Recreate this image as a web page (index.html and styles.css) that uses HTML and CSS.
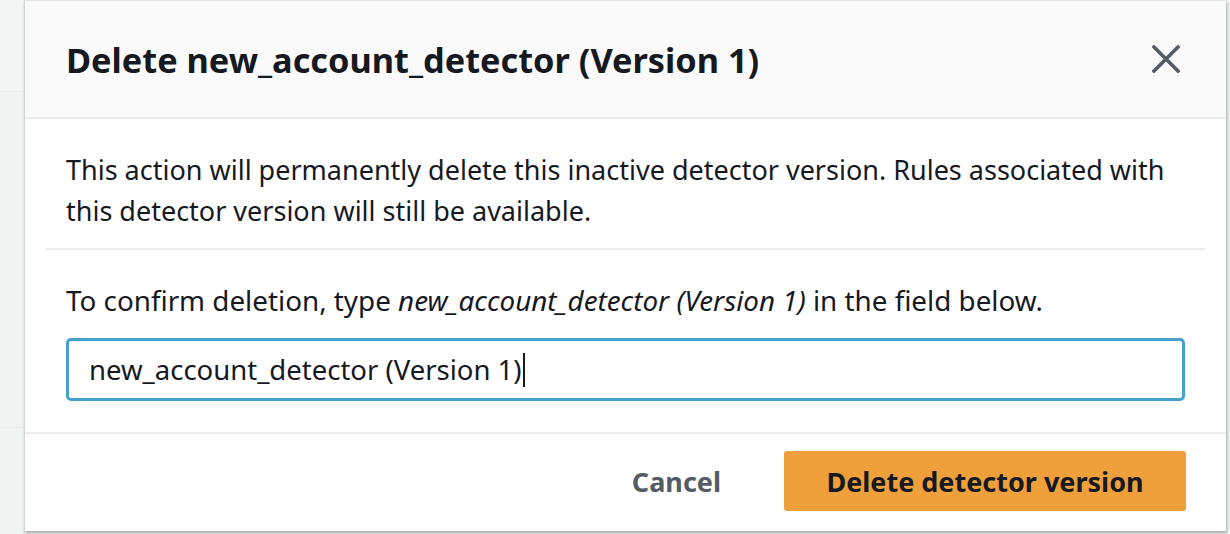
FILE: index.html
```html
<!DOCTYPE html>
<html>
<head>
<meta charset="utf-8">
<link rel="stylesheet" href="styles.css">
</head>
<body>
<div class="page">
  <div class="backdrop">
    <div class="bg-row bg-top"></div>
    <div class="bg-row bg-mid"></div>
    <div class="bg-row bg-bottom"></div>
  </div>
  <div class="modal">
    <div class="modal-header">
      <h2 class="modal-title">Delete new_account_detector (Version 1)</h2>
      <button class="close-btn" aria-label="Close">
        <svg width="28" height="28" viewBox="0 0 28 28"><path d="M2 2 L26 26 M26 2 L2 26" stroke="#545b64" stroke-width="3.6" stroke-linecap="square" fill="none"/></svg>
      </button>
    </div>
    <div class="modal-body">
      <p class="intro">This action will permanently delete this inactive detector version. Rules associated with this detector version will still be available.</p>
      <div class="divider"></div>
      <p class="confirm">To confirm deletion, type <em>new_account_detector (Version 1)</em> in the field below.</p>
      <div class="input"><span class="input-text">new_account_detector (Version 1)</span><span class="caret"></span></div>
    </div>
    <div class="modal-footer">
      <button class="btn-link">Cancel</button>
      <button class="btn-primary">Delete detector version</button>
    </div>
  </div>
</div>
</body>
</html>
```
FILE: styles.css
```css
html, body {
  margin: 0;
  padding: 0;
  background: #f2f3f3;
}
body {
  font-family: "Noto Sans", "Open Sans", sans-serif;
  color: #16191f;
  width: 1230px;
  height: 534px;
  overflow: hidden;
}
.page {
  display: flex;
  height: 534px;
}
.backdrop {
  width: 24px;
  display: flex;
  flex-direction: column;
}
.bg-row { background: #f2f3f3; }
.bg-top { height: 91px; background: #f4f5f5; border-bottom: 1px solid #eceeee; }
.bg-mid { height: 335px; border-bottom: 1px solid #e6e8e8; }
.bg-bottom { flex: 1; }
.modal {
  width: 1201px;
  height: 530px;
  background: #fff;
  border-top: 1px solid #e4e6e6;
  border-left: 1px solid #d0d4d6;
  box-shadow: 1px 2px 3px rgba(0, 28, 36, 0.35);
  display: flex;
  flex-direction: column;
}
.modal-header {
  height: 116px;
  background: #fafafa;
  border-bottom: 2px solid #eaeded;
  display: flex;
  align-items: center;
  justify-content: space-between;
  padding: 0 46px 0 41px;
  box-sizing: content-box;
}
.modal-title {
  margin: 0;
  font-size: 34.3px;
  font-weight: 700;
  line-height: 40px;
  margin-top: 2px;
  color: #16191f;
}
.close-btn {
  background: none;
  border: 0;
  padding: 0;
  width: 28px;
  height: 28px;
  display: flex;
}
.modal-body {
  padding: 0 41px;
}
.intro {
  margin: 0;
  padding-top: 30px;
  font-size: 27px;
  line-height: 41px;
}
.divider {
  height: 2px;
  background: #eaeded;
  margin: 17px -20px 0 -20px;
}
.confirm {
  margin: 0;
  padding-top: 30px;
  font-size: 27.8px;
  line-height: 40px;
}
.confirm em { font-style: italic; }
.input {
  margin-top: 18px;
  height: 57px;
  border: 3px solid #44a1cc;
  border-radius: 5px;
  display: flex;
  align-items: center;
  padding-left: 20px;
  font-size: 27.5px;
}
.caret {
  width: 2px;
  height: 34px;
  background: #16191f;
  margin-left: 1px;
}
.modal-footer {
  margin-top: 31px;
  border-top: 2px solid #eaeded;
  display: flex;
  justify-content: flex-end;
  align-items: center;
  padding: 17px 40px 0 0;
  gap: 63px;
}
.btn-link {
  background: none;
  border: 0;
  font-family: inherit;
  font-size: 27px;
  font-weight: 700;
  color: #545b64;
  padding: 0;
}
.btn-primary {
  font-family: inherit;
  font-size: 27px;
  font-weight: 700;
  color: #16191f;
  background: #f0a03a;
  border: 0;
  border-radius: 3px;
  width: 402px;
  height: 60px;
}
```
